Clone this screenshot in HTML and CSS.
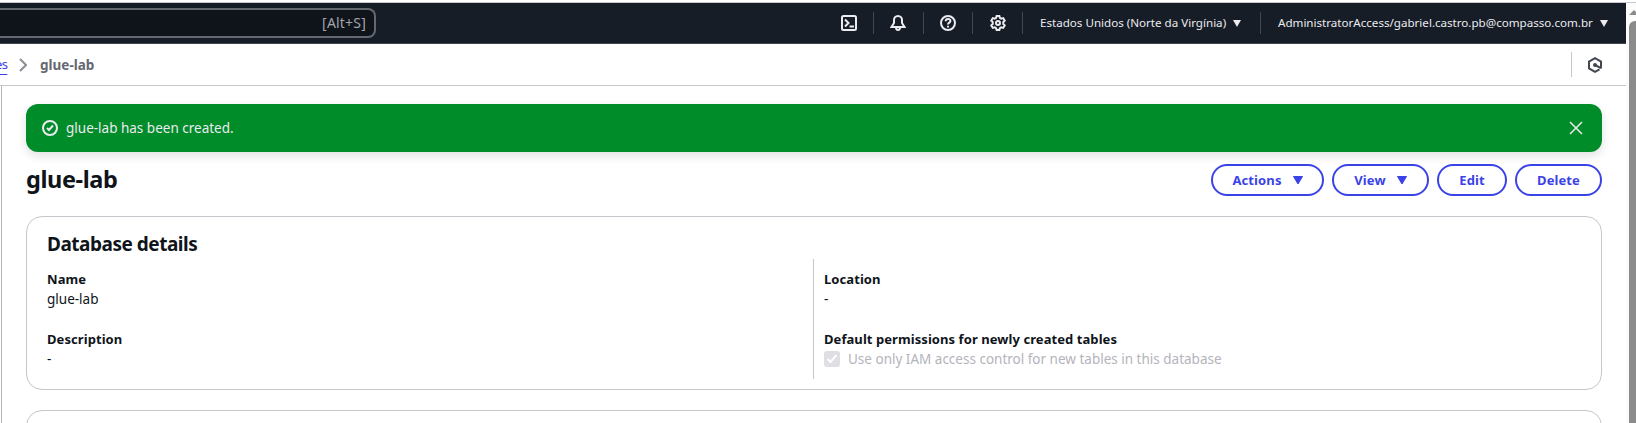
FILE: index.html
```html
<!DOCTYPE html>
<html lang="en">
<head>
<meta charset="utf-8">
<title>glue-lab</title>
<link rel="stylesheet" href="styles.css">
</head>
<body>
<div class="window">
  <div class="page">
    <header class="topnav">
      <div class="search"><span class="search-hint">[Alt+S]</span></div>
      <nav class="utilities">
        <a class="utility icon-utility shell"><svg class="icon" viewBox="0 0 16 16"><rect x="1" y="1" width="14" height="14" rx="1.5"/><path d="M4 4.500 7.500 8 4 11.500M8.500 11.500H13"/></svg></a>
        <a class="utility icon-utility"><svg class="icon" viewBox="0 0 16 16"><path d="M8 1C5.500 1 4 3 4 5v3L1.500 12h13L12 8V5c0-2-1.500-4-4-4ZM6 12.500c0 3.200 4 3.200 4 0"/></svg></a>
        <a class="utility icon-utility"><svg class="icon" viewBox="0 0 16 16"><circle cx="8" cy="8" r="7"/><path d="M5.700 6.300C5.700 3 10.600 3.200 10.400 6.100 10.200 7.700 8 7.600 8 9.600M8 10.800v1.700"/></svg></a>
        <a class="utility icon-utility"><svg class="icon" viewBox="0 0 16 16"><path d="M6.600 1h2.800l.5 1.900 1.300.8 2-.6 1.500 2.500L13.300 7v2l1.400 1.400-1.500 2.500-2-.6-1.300.8-.5 1.900H6.600l-.5-1.900-1.300-.8-2 .6-1.500-2.500L2.700 9V7L1.300 5.600l1.500-2.500 2 .6 1.300-.8Z"/><circle cx="8" cy="8" r="2"/></svg></a>
        <a class="utility region"><span class="region-text">Estados Unidos (Norte da Virgínia)</span><svg class="caret-small" viewBox="0 0 8 7"><path d="M0 0h8L4 7Z"/></svg></a>
        <a class="utility account"><span class="account-text">AdministratorAccess/gabriel.castro.pb@compasso.com.br</span><svg class="caret-small" viewBox="0 0 8 7"><path d="M0 0h8L4 7Z"/></svg></a>
      </nav>
    </header>
    <div class="breadcrumbs">
      <div class="trail">
        <a class="parent-link">es</a>
        <svg class="chevron" viewBox="0 0 8 14"><path d="m1 1 6 6-6 6"/></svg>
        <span class="current">glue-lab</span>
      </div>
      <div class="tools"><svg class="hexagon" viewBox="0 0 16 16"><path d="M14 11.500V4.600L8 1.200 2 4.600v6.800l6 3.400 4.500-2.500M8 8l6 3.200"/><circle cx="8" cy="8" r="1"/></svg></div>
    </div>
    <main class="content">
      <div class="flash">
        <svg class="icon" viewBox="0 0 16 16"><circle cx="8" cy="8" r="7"/><path d="m5 8 2 2 4-4.500"/></svg>
        <span class="flash-text">glue-lab has been created.</span>
        <svg class="close" viewBox="0 0 14 14"><path d="m1 1 12 12M13 1 1 13"/></svg>
      </div>
      <div class="title-row">
        <h1 class="title">glue-lab</h1>
        <div class="actions">
          <button class="button actions-button">Actions<svg class="caret" viewBox="0 0 10 9"><path d="M.5.5h9L5 8Z"/></svg></button>
          <button class="button view-button">View<svg class="caret" viewBox="0 0 10 9"><path d="M.5.5h9L5 8Z"/></svg></button>
          <button class="button edit-button">Edit</button>
          <button class="button delete-button">Delete</button>
        </div>
      </div>
      <section class="panel">
        <h2 class="panel-title">Database details</h2>
        <div class="columns">
          <dl class="column">
            <div class="pair"><dt class="label">Name</dt><dd class="value">glue-lab</dd></div>
            <div class="pair"><dt class="label">Description</dt><dd class="value">-</dd></div>
          </dl>
          <dl class="column divided">
            <div class="pair"><dt class="label">Location</dt><dd class="value">-</dd></div>
            <div class="pair"><dt class="label">Default permissions for newly created tables</dt>
            <dd class="value disabled"><svg class="checkbox" viewBox="0 0 16 16"><path d="m3.500 8 3 3 6-7"/></svg><span class="check-text">Use only IAM access control for new tables in this database</span></dd></div>
          </dl>
        </div>
      </section>
      <section class="panel next-panel"></section>
    </main>
  </div>
  <aside class="scrollbar">
    <svg class="arrow-up" viewBox="0 0 10 5"><path d="M0 5 5 0l5 5Z"/></svg>
    <div class="thumb"></div>
  </aside>
</div>
</body>
</html>
```
FILE: styles.css
```css
* { box-sizing: border-box; }
body {
  margin: 0;
  height: 423px;
  overflow: hidden;
  background: #fff;
  color: #0f141a;
  font: 13.5px/20px "Noto Sans", "Open Sans", sans-serif;
}
svg { display: block; flex: none; fill: none; stroke: currentColor; }
h1, h2, dl, dd { margin: 0; }
.window { display: flex; height: 423px; padding-top: 2px; overflow: hidden; }
.page { flex: 1; min-width: 0; border-top: 1px solid #c8c8cc; }
.topnav {
  display: flex;
  justify-content: space-between;
  align-items: center;
  height: 41px;
  background: #161d26;
  border-bottom: 1px solid #424650;
  color: #ebebf0;
}
.search {
  display: flex;
  align-items: center;
  justify-content: flex-end;
  width: 376px;
  height: 30px;
  padding-right: 8px;
  background: #0f141a;
  border: 2px solid #656871;
  border-left: 0;
  border-radius: 0 8px 8px 0;
}
.search-hint { color: #a4a4ad; font-size: 14px; letter-spacing: .2px; }
.utilities { display: flex; align-items: center; }
.utility { display: flex; flex: none; align-items: center; height: 22px; font-size: 11.600px; white-space: nowrap; }
.utility + .utility { border-left: 1px solid #424650; }
.icon-utility { width: 49.700px; justify-content: center; }
.shell { padding-left: 2px; }
.icon { width: 16px; height: 16px; stroke-width: 2; }
.region { width: 238px; padding-left: 17px; gap: 7px; }
.account { width: 366px; padding-left: 17px; gap: 7px; }
.caret-small { width: 8px; height: 7px; fill: currentColor; stroke: none; }
.breadcrumbs {
  display: flex;
  align-items: center;
  justify-content: space-between;
  height: 42px;
  border-bottom: 1px solid #c6c6cd;
}
.trail { display: flex; align-items: center; }
.parent-link { width: 12px; margin-left: -5px; color: #3b43e6; height: 19px; line-height: 18px; text-decoration: underline; text-underline-offset: 5px; font-size: 13px; letter-spacing: -.6px; }
.chevron { width: 8px; height: 14px; margin: 0 13px 0 12px; color: #8c8c94; stroke-width: 2; }
.current { font-weight: 700; color: #656871; }
.tools { display: flex; align-items: center; width: 55px; height: 25px; padding-left: 15px; border-left: 1px solid #c6c6cd; color: #424650; }
.hexagon { width: 16px; height: 16px; stroke-width: 2; }
.content { margin-left: 1px; border-left: 1px solid #b4b4bb; height: 340px; padding: 18px 24px 0; }
.flash {
  display: flex;
  align-items: center;
  height: 48px;
  padding: 0 19px 0 16px;
  border-radius: 12px;
  background: #008c29;
  box-shadow: 0 4px 8px 1px rgba(0, 7, 22, .1);
  color: #ebebf0;
}
.flash-text { flex: 1; margin-left: 8px; }
.close { width: 14px; height: 14px; stroke-width: 1.500; }
.title-row { display: flex; justify-content: space-between; height: 44px; padding-top: 12px; margin-bottom: 20px; }
.title { font-size: 23.500px; line-height: 31px; letter-spacing: -.4px; }
.actions { display: flex; gap: 8px; }
.button {
  display: flex;
  align-items: center;
  justify-content: center;
  height: 32px;
  padding: 0;
  border: 2px solid #3b43e6;
  border-radius: 20px;
  background: #fff;
  color: #3b43e6;
  font: 700 13px/20px "Noto Sans", "Open Sans", sans-serif;
  letter-spacing: .1px;
}
.actions-button { width: 113px; }
.view-button { width: 97px; }
.edit-button { width: 70px; }
.delete-button { width: 87px; }
.caret { width: 10px; height: 9px; margin-left: 11px; fill: currentColor; }
.panel { height: 174px; padding: 15px 20px 0; border: 1px solid #c6c6cd; border-radius: 16px; }
.panel-title { height: 27px; font-size: 19px; line-height: 25px; letter-spacing: -.48px; }
.columns { display: grid; grid-template-columns: 766px 1fr; height: 120px; }
.column { padding-top: 10px; }
.divided { padding-left: 10px; border-left: 1px solid #c6c6cd; }
.pair { height: 50px; }
.pair + .pair { margin-top: 10px; }
.label { font-size: 13px; font-weight: 700; letter-spacing: .07px; }
.disabled { display: flex; align-items: center; color: #b4b4bb; }
.checkbox { width: 16px; height: 16px; margin-right: 8px; border-radius: 3px; background: #dedee3; color: #fff; stroke-width: 2; }
.next-panel { margin-top: 20px; }
.scrollbar { width: 10px; padding: 7px 0 0 3px; background: #fcfcfc; border-top: 1px solid #c8c8cc; overflow: hidden; }
.arrow-up { width: 10px; height: 5px; fill: #8b8b8b; stroke: none; }
.thumb { width: 14px; height: 430px; margin-top: 6px; border-radius: 6px; background: #8b8b8b; }
```
